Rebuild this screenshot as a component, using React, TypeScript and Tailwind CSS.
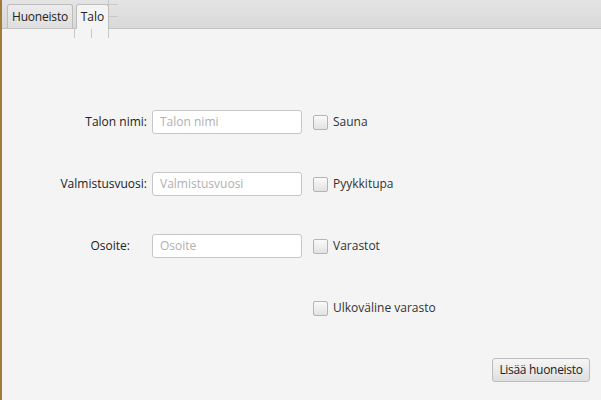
import React from 'react';

const font = { fontFamily: '"Open Sans", "Noto Sans", "Liberation Sans", sans-serif' };

const Checkbox = ({ label }: { label: string }) => (
  <div className="flex items-center gap-[5px]">
    <div className="w-[15px] h-[15px] rounded-[2px] border border-[#b4b4b4] bg-gradient-to-b from-[#fafafa] to-[#e2e2e2]" />
    <span className="text-[12px] text-[#333]">{label}</span>
  </div>
);

const FieldRow = ({ label, placeholder, check, labelPad = 0 }: { label: string; placeholder: string; check: string; labelPad?: number }) => (
  <div className="flex items-center h-[24px]">
    <div className="w-[145px] text-right text-[12px] text-[#222]" style={{ paddingRight: labelPad }}>{label}</div>
    <div className="ml-[5px] w-[150px] h-[24px] rounded-[3px] border border-[#c6c6c6] bg-white flex items-center pl-[7px] text-[12px] text-[#b0b0b0]">
      {placeholder}
    </div>
    <div className="ml-[11px]">
      <Checkbox label={check} />
    </div>
  </div>
);

export default function App() {
  return (
    <div className="w-[601px] h-[400px] flex bg-[#f4f4f4] overflow-hidden" style={font}>
      <div className="w-[2px] h-full bg-[#a27b3b]" />
      <div className="flex-1 flex flex-col relative">
        {/* tab header */}
        <div className="h-[29px] flex items-end pl-[5px] gap-[3px] bg-gradient-to-b from-[#e4e4e4] to-[#d9d9d9] border-b border-[#c3c3c3]">
          <div className="w-[66px] h-[24px] flex items-center justify-center rounded-t-[3px] border border-b-0 border-[#bdbdbd] bg-gradient-to-b from-[#ececec] to-[#dedede] text-[12px] text-[#222] tracking-[-0.2px]">
            Huoneisto
          </div>
          <div className="w-[33px] h-[25px] -mb-px flex items-center justify-center rounded-t-[3px] border border-b-0 border-[#bdbdbd] bg-[#f4f4f4] text-[12px] text-[#222]">
            Talo
          </div>
        </div>

        {/* grid lines overlay */}
        <svg className="absolute left-0 top-0 pointer-events-none" width="599" height="40">
          <g stroke="#c8c8c8" strokeWidth="1">
            <line x1="72.5" y1="29" x2="72.5" y2="38" />
            <line x1="89.5" y1="29" x2="89.5" y2="38" />
            <line x1="106.5" y1="29" x2="106.5" y2="38" />
            <line x1="106.5" y1="0" x2="106.5" y2="5" />
            <line x1="107" y1="4.5" x2="116" y2="4.5" />
            <line x1="107" y1="16.5" x2="116" y2="16.5" />
          </g>
        </svg>

        {/* form */}
        <div className="flex flex-col gap-[38px] pt-[81px]">
          <FieldRow label="Talon nimi:" placeholder="Talon nimi" check="Sauna" />
          <FieldRow label="Valmistusvuosi:" placeholder="Valmistusvuosi" check="Pyykkitupa" />
          <FieldRow label="Osoite:" placeholder="Osoite" check="Varastot" labelPad={17} />
          <div className="flex items-center h-[24px] pl-[311px]">
            <Checkbox label="Ulkoväline varasto" />
          </div>
        </div>

        <div className="flex justify-end pr-[11px] mt-[38px]">
          <button className="w-[98px] h-[24px] flex items-center justify-center rounded-[3px] border border-[#bcbcbc] bg-gradient-to-b from-[#f6f6f6] to-[#dfdfdf] text-[12px] text-[#222] tracking-[-0.3px]">
            Lisää huoneisto
          </button>
        </div>
      </div>
    </div>
  );
}
